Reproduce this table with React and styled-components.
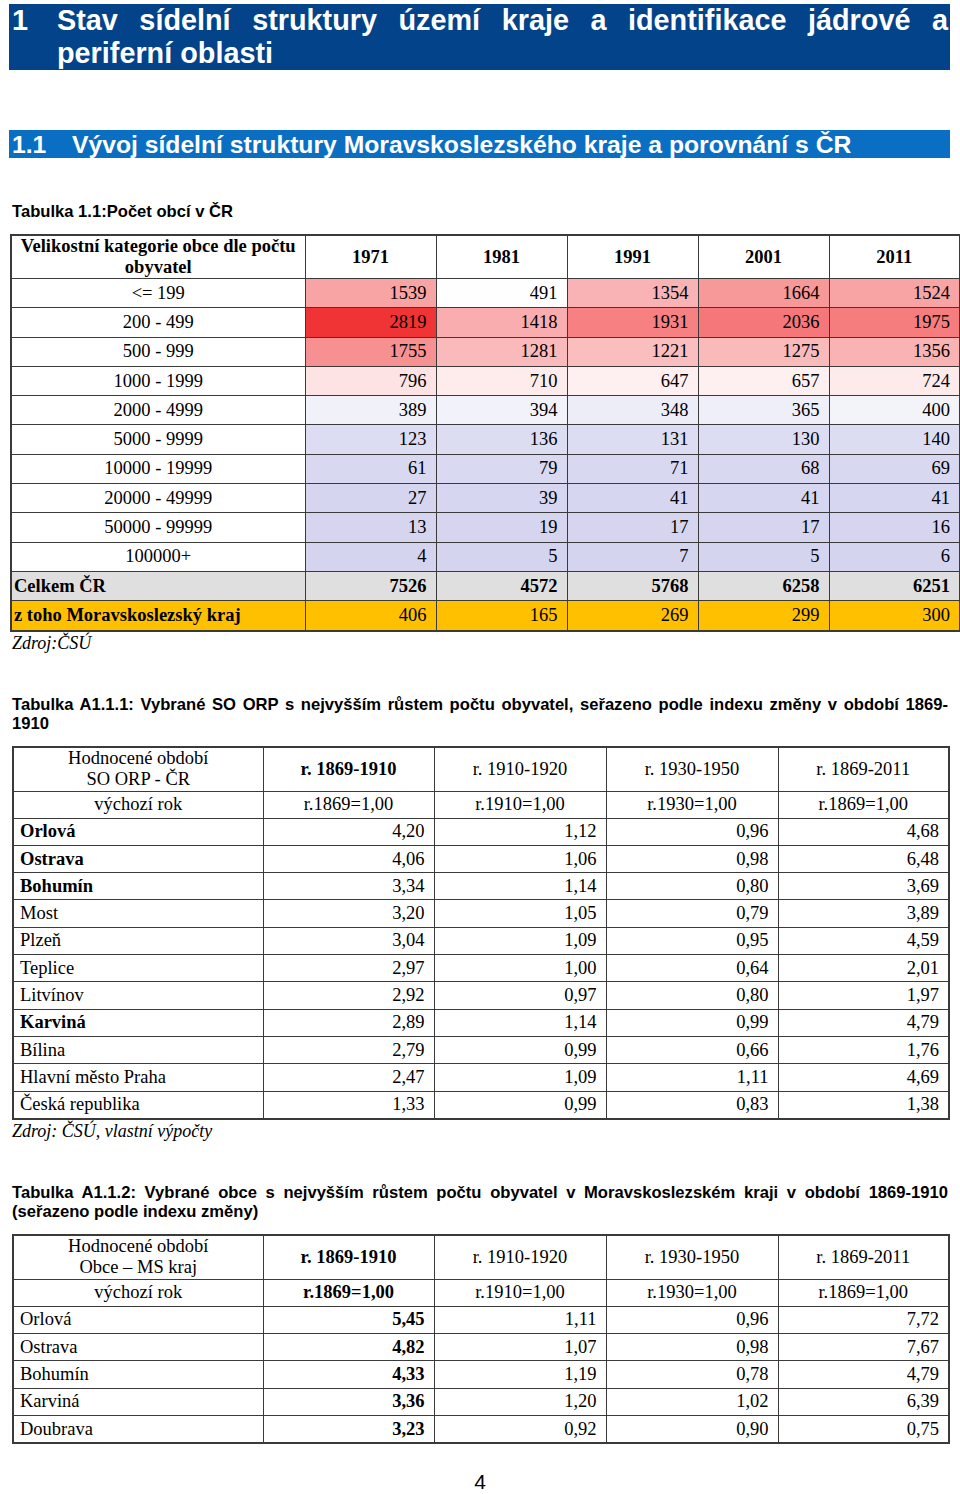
import React from 'react';
import styled, { createGlobalStyle } from 'styled-components';

const Global = createGlobalStyle`
  html, body { margin: 0; padding: 0; background: #fff; }
  body { font-family: "Liberation Serif", "Times New Roman", serif; color: #000; }
`;

const SANS = `"Liberation Sans", Arial, sans-serif`;
const SERIF = `"Liberation Serif", "Times New Roman", serif`;

const Page = styled.div`
  width: 960px;
  min-height: 1494px;
  box-sizing: border-box;
  padding-top: 4px;
`;

const ChapterBanner = styled.div`
  margin: 0 10px 0 9px;
  height: 66px;
  background: #03438a;
  color: #fff;
  display: grid;
  grid-template-columns: 45px 1fr;
  padding: 0 2px 0 3px;
  box-sizing: border-box;
  font: bold 28.8px/32.5px ${SANS};
`;

const SectionBanner = styled.div`
  margin: 60px 10px 0 9px;
  height: 28px;
  background: #0a6fc2;
  color: #fff;
  display: grid;
  grid-template-columns: 60px 1fr;
  padding-left: 3px;
  box-sizing: border-box;
  font: bold 24.7px/29px ${SANS};
`;

const JustLine = styled.div`
  text-align: justify;
  text-align-last: justify;
`;

const PlainLine = styled.div``;

const TableTitle = styled.div`
  margin: ${p => p.$top}px 12px 0 12px;
  font: bold 16.6px/19px ${SANS};
`;

const Table = styled.table`
  border-collapse: collapse;
  margin: ${p => p.$top}px 0 0 ${p => p.$left}px;
  width: ${p => p.$width}px;
  table-layout: fixed;
  font: 18.5px/21px ${SERIF};
  border: 2px solid #3a3a3a;
`;

const Th = styled.th`
  border: 1px solid #3a3a3a;
  height: ${p => p.$h || 27}px;
  padding: 0 2px;
  font-weight: ${p => (p.$bold ? 'bold' : 'normal')};
  text-align: center;
  vertical-align: middle;
  background: #fff;
`;

const Td = styled.td`
  border: 1px solid #3a3a3a;
  height: ${p => p.$h || 26.3}px;
  padding: 0 ${p => (p.$align === 'right' ? 9 : 2)}px 0 ${p => (p.$align === 'left' ? p.$padL ?? 6 : 2)}px;
  text-align: ${p => p.$align || 'center'};
  font-weight: ${p => (p.$bold ? 'bold' : 'normal')};
  background: ${p => p.$bg || '#fff'};
  vertical-align: middle;
  white-space: nowrap;
`;

const Source = styled.div`
  margin: ${p => p.$top || 0}px 0 0 12px;
  font: italic 18px/22px ${SERIF};
`;

const PageNumber = styled.div`
  margin-top: 26px;
  text-align: center;
  font: 21px/24px ${SANS};
`;

const mix = (a, b, t) => Math.round(a + (b - a) * t);
function heat(v) {
  const mid = 480;
  if (v >= mid) {
    const t = Math.min(1, (v - mid) / (2819 - mid));
    return `rgb(${mix(255, 240, t)},${mix(255, 51, t)},${mix(255, 53, t)})`;
  }
  const t = Math.pow((mid - v) / (mid - 4), 0.7);
  return `rgb(${mix(255, 212, t)},${mix(255, 212, t)},${mix(255, 239, t)})`;
}

const years = ['1971', '1981', '1991', '2001', '2011'];
const t1rows = [
  ['<= 199', [1539, 491, 1354, 1664, 1524]],
  ['200 - 499', [2819, 1418, 1931, 2036, 1975]],
  ['500 - 999', [1755, 1281, 1221, 1275, 1356]],
  ['1000 - 1999', [796, 710, 647, 657, 724]],
  ['2000 - 4999', [389, 394, 348, 365, 400]],
  ['5000 - 9999', [123, 136, 131, 130, 140]],
  ['10000 - 19999', [61, 79, 71, 68, 69]],
  ['20000 - 49999', [27, 39, 41, 41, 41]],
  ['50000 - 99999', [13, 19, 17, 17, 16]],
  ['100000+', [4, 5, 7, 5, 6]],
];

const periods = ['r. 1869-1910', 'r. 1910-1920', 'r. 1930-1950', 'r. 1869-2011'];
const bases = ['r.1869=1,00', 'r.1910=1,00', 'r.1930=1,00', 'r.1869=1,00'];

const t2rows = [
  ['Orlová', true, ['4,20', '1,12', '0,96', '4,68']],
  ['Ostrava', true, ['4,06', '1,06', '0,98', '6,48']],
  ['Bohumín', true, ['3,34', '1,14', '0,80', '3,69']],
  ['Most', false, ['3,20', '1,05', '0,79', '3,89']],
  ['Plzeň', false, ['3,04', '1,09', '0,95', '4,59']],
  ['Teplice', false, ['2,97', '1,00', '0,64', '2,01']],
  ['Litvínov', false, ['2,92', '0,97', '0,80', '1,97']],
  ['Karviná', true, ['2,89', '1,14', '0,99', '4,79']],
  ['Bílina', false, ['2,79', '0,99', '0,66', '1,76']],
  ['Hlavní město Praha', false, ['2,47', '1,09', '1,11', '4,69']],
  ['Česká republika', false, ['1,33', '0,99', '0,83', '1,38']],
];

const t3rows = [
  ['Orlová', ['5,45', '1,11', '0,96', '7,72']],
  ['Ostrava', ['4,82', '1,07', '0,98', '7,67']],
  ['Bohumín', ['4,33', '1,19', '0,78', '4,79']],
  ['Karviná', ['3,36', '1,20', '1,02', '6,39']],
  ['Doubrava', ['3,23', '0,92', '0,90', '0,75']],
];

function IndexTable({ top, label2, boldBase, rows, renderRow }) {
  return (
    <Table $top={top} $left={12} $width={934}>
      <colgroup>
        <col style={{ width: 250 }} />
        <col style={{ width: 171 }} />
        <col style={{ width: 172 }} />
        <col style={{ width: 172 }} />
        <col style={{ width: 171 }} />
      </colgroup>
      <thead>
        <tr>
          <Th $h={43}>
            Hodnocené období
            <br />
            {label2}
          </Th>
          {periods.map((p, i) => (
            <Th key={p + i} $h={43} $bold={i === 0}>
              {p}
            </Th>
          ))}
        </tr>
        <tr>
          <Th $h={26}>výchozí rok</Th>
          {bases.map((b, i) => (
            <Th key={b + i} $h={26} $bold={boldBase && i === 0}>
              {b}
            </Th>
          ))}
        </tr>
      </thead>
      <tbody>{rows.map(renderRow)}</tbody>
    </Table>
  );
}

export default function App() {
  return (
    <Page>
      <Global />
      <ChapterBanner>
        <div>1</div>
        <div>
          <JustLine>Stav sídelní struktury území kraje a identifikace jádrové a</JustLine>
          <PlainLine>periferní oblasti</PlainLine>
        </div>
      </ChapterBanner>

      <SectionBanner>
        <div>1.1</div>
        <div>Vývoj sídelní struktury Moravskoslezského kraje a porovnání s ČR</div>
      </SectionBanner>

      <TableTitle $top={44}>Tabulka 1.1:Počet obcí v ČR</TableTitle>

      <Table $top={13} $left={10} $width={946}>
        <colgroup>
          <col style={{ width: 294 }} />
          {years.map(y => (
            <col key={y} style={{ width: 131 }} />
          ))}
        </colgroup>
        <thead>
          <tr>
            <Th $h={42} $bold>
              Velikostní kategorie obce dle počtu
              <br />
              obyvatel
            </Th>
            {years.map(y => (
              <Th key={y} $h={42} $bold>
                {y}
              </Th>
            ))}
          </tr>
        </thead>
        <tbody>
          {t1rows.map(([cat, vals]) => (
            <tr key={cat}>
              <Td $h={28.3}>{cat}</Td>
              {vals.map((v, i) => (
                <Td key={i} $h={28.3} $align="right" $bg={heat(v)}>
                  {v}
                </Td>
              ))}
            </tr>
          ))}
          <tr>
            <Td $h={28.3} $align="left" $padL={2} $bold $bg="#dfdfdf">
              Celkem ČR
            </Td>
            {[7526, 4572, 5768, 6258, 6251].map((v, i) => (
              <Td key={i} $h={28.3} $align="right" $bold $bg="#dfdfdf">
                {v}
              </Td>
            ))}
          </tr>
          <tr>
            <Td $h={28.3} $align="left" $padL={2} $bold $bg="#ffc000">
              z toho Moravskoslezský kraj
            </Td>
            {[406, 165, 269, 299, 300].map((v, i) => (
              <Td key={i} $h={28.3} $align="right" $bg="#ffc000">
                {v}
              </Td>
            ))}
          </tr>
        </tbody>
      </Table>
      <Source>Zdroj:ČSÚ</Source>

      <TableTitle $top={41}>
        <JustLine>
          Tabulka A1.1.1: Vybrané SO ORP s nejvyšším růstem počtu obyvatel, seřazeno podle indexu změny v období 1869-
        </JustLine>
        <PlainLine>1910</PlainLine>
      </TableTitle>

      <IndexTable
        top={13}
        label2="SO ORP - ČR"
        boldBase={false}
        rows={t2rows}
        renderRow={([name, bold, vals]) => (
          <tr key={name}>
            <Td $align="left" $bold={bold}>
              {name}
            </Td>
            {vals.map((v, i) => (
              <Td key={i} $align="right">
                {v}
              </Td>
            ))}
          </tr>
        )}
      />
      <Source>Zdroj: ČSÚ, vlastní výpočty</Source>

      <TableTitle $top={41}>
        <JustLine>
          Tabulka A1.1.2: Vybrané obce s nejvyšším růstem počtu obyvatel v Moravskoslezském kraji v období 1869-1910
        </JustLine>
        <PlainLine>(seřazeno podle indexu změny)</PlainLine>
      </TableTitle>

      <IndexTable
        top={13}
        label2="Obce – MS kraj"
        boldBase
        rows={t3rows}
        renderRow={([name, vals]) => (
          <tr key={name}>
            <Td $align="left">{name}</Td>
            {vals.map((v, i) => (
              <Td key={i} $align="right" $bold={i === 0}>
                {v}
              </Td>
            ))}
          </tr>
        )}
      />

      <PageNumber>4</PageNumber>
    </Page>
  );
}
